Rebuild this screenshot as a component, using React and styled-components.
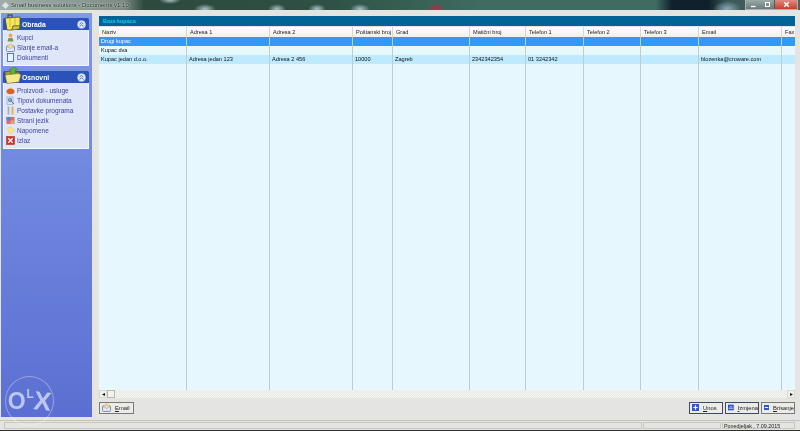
import React from 'react'
import styled, { createGlobalStyle } from 'styled-components'

const GlobalStyle = createGlobalStyle`
    html, body {
        margin: 0;
        padding: 0;
        background: #e4e4e2;
    }
    body {
        font-family: "Liberation Sans", Arial, sans-serif;
        font-size: 5.6px;
        overflow: hidden;
    }
`

const columns = [
    { title: 'Naziv', width: 88 },
    { title: 'Adresa 1', width: 83 },
    { title: 'Adresa 2', width: 83 },
    { title: 'Poštanski broj', width: 40 },
    { title: 'Grad', width: 77 },
    { title: 'Matični broj', width: 56 },
    { title: 'Telefon 1', width: 58 },
    { title: 'Telefon 2', width: 57 },
    { title: 'Telefon 3', width: 58 },
    { title: 'Email', width: 83 },
    { title: 'Fax', width: 14 },
]

const rows = [
    { cells: ['Drugi kupac'], kind: 'selected' },
    { cells: ['Kupac dva'], kind: 'plain' },
    {
        cells: ['Kupac jedan d.o.o.', 'Adresa jedan 123', 'Adresa 2 456', '10000', 'Zagreb', '2342342354', '01 3242342', '', '', 'blozenka@croware.com', ''],
        kind: 'alt',
    },
]

const gridColumns = columns.map((c) => c.width + 'px').join(' ')

const FolderIcon = ({ arrow }) => (
    <svg width="18" height="17" viewBox="0 0 18 17">
        {arrow
            ? <>
                <path d="M1 5 L7 4 L8 6 L15 5 L15 14 L3 16 Z" fill="#b79a3a" stroke="#5d5a20" strokeWidth="0.6" />
                <path d="M6 7 L7 3 L5 3 L10 0 L14 2.5 L11.5 3 L11 8 Z" fill="#5fb52c" stroke="#2f7a16" strokeWidth="0.5" />
                <path d="M1 8 L14 6.5 L17 7.5 L15 15 L3 16.5 Z" fill="#f5ea8a" stroke="#6f6a24" strokeWidth="0.6" />
            </>
            : <>
                <path d="M4 0.5 L4 12 M8 0.5 L8 10 M4 1 L8 1" fill="none" stroke="#3f3c18" strokeWidth="1" />
                <path d="M1 4 L16 3 L16 12 L9 12 L8 16 L3 16 Z" fill="#f4e75c" stroke="#4e4a18" strokeWidth="0.8" />
                <path d="M9 12 L16 12 L15 15 L8 16 Z" fill="#d6c440" stroke="#4e4a18" strokeWidth="0.5" />
                <path d="M6 4 L6 13 M11 4 L11 11" fill="none" stroke="#a89a30" strokeWidth="0.6" />
            </>}
    </svg>
)

const CollapseIcon = () => (
    <svg width="9" height="9" viewBox="0 0 9 9">
        <circle cx="4.5" cy="4.5" r="4" fill="#e8edfb" stroke="#9fb2e8" strokeWidth="0.6" />
        <path d="M2.5 4.2 L4.5 2.4 L6.5 4.2 M2.5 6.6 L4.5 4.8 L6.5 6.6" fill="none" stroke="#2d4fb0" strokeWidth="0.8" />
    </svg>
)

const MenuIcon = ({ name }) => {
    const art = {
        person: <><circle cx="4.5" cy="2.5" r="2" fill="#e8a85a" /><path d="M1.5 8.5 L2.5 5 L6.5 5 L7.5 8.5 Z" fill="#7f9a3a" /></>,
        mail: <><rect x="0.5" y="3" width="8" height="5.5" rx="1" fill="#dfe6f5" stroke="#5a6a9a" strokeWidth="0.7" /><path d="M1 3.5 L4.5 1 L8 3.5 L4.5 5.5 Z" fill="#f2dd8c" stroke="#8b8a60" strokeWidth="0.4" /></>,
        doc: <><rect x="1.5" y="0.5" width="6" height="8" fill="#eaf2fb" stroke="#35609f" strokeWidth="0.8" /></>,
        box: <><ellipse cx="4.5" cy="5.5" rx="4" ry="2.8" fill="#d9622b" /><path d="M2 3 Q4.5 0 7 3 Z" fill="#f3b25a" /></>,
        search: <><rect x="1" y="1" width="6" height="7.5" fill="#d8e4ee" stroke="#7a8fa0" strokeWidth="0.5" /><circle cx="4" cy="4" r="1.7" fill="#7fb2d8" stroke="#35609f" strokeWidth="0.6" /><path d="M5.2 5.2 L8 8" stroke="#35609f" strokeWidth="0.9" /></>,
        tools: <><path d="M2.5 0.5 L2.5 8.5" stroke="#a8aeb6" strokeWidth="1.8" /><path d="M6.5 0.5 L6.5 8.5" stroke="#e0ad4c" strokeWidth="1.8" /></>,
        flag: <><rect x="0.5" y="1" width="8" height="7" fill="#d8705e" /><rect x="0.5" y="1" width="4" height="3.5" fill="#5a80d0" /><rect x="4.5" y="4.5" width="4" height="3.5" fill="#e89a88" /></>,
        note: <><path d="M1 2 L6 0.8 L8.5 5 L4 8.5 Z" fill="#f6e58c" stroke="#e0cc70" strokeWidth="0.4" /></>,
        exit: <><rect x="0.5" y="0.5" width="8" height="8" fill="#e02a20" stroke="#a51a14" strokeWidth="0.5" /><path d="M2.3 2.3 L6.7 6.7 M6.7 2.3 L2.3 6.7" stroke="#fff" strokeWidth="1.3" /></>,
    }
    return <svg width="9" height="9" viewBox="0 0 9 9">{art[name]}</svg>
}

const ActionIcon = ({ kind }) => (
    <svg width="7" height="7" viewBox="0 0 8 8">
        <rect width="8" height="8" fill="#2f55c8" />
        {kind === 'plus' && <path d="M4 1.5 L4 6.5 M1.5 4 L6.5 4" stroke="#fff" strokeWidth="1.4" />}
        {kind === 'edit' && <path d="M1.5 5.5 L4 2 L6.5 5.5 Z" fill="none" stroke="#dfe8ff" strokeWidth="0.9" />}
        {kind === 'minus' && <path d="M1.2 4 L6.8 4" stroke="#fff" strokeWidth="1.5" />}
    </svg>
)

const WindowGlyph = ({ kind }) => (
    <svg width="7" height="7" viewBox="0 0 7 7">
        {kind === 'min' && <path d="M1 5.5 L5.5 5.5" stroke="#fff" strokeWidth="1.4" />}
        {kind === 'max' && <rect x="1.5" y="1.5" width="4" height="4" fill="none" stroke="#fff" strokeWidth="1" />}
        {kind === 'close' && <path d="M1.2 1.2 L5.8 5.8 M5.8 1.2 L1.2 5.8" stroke="#fff" strokeWidth="1.4" />}
    </svg>
)

const App = () => {
    return (
        <Window>
            <GlobalStyle />
            <TitleBar>
                <TitleIcon />
                <TitleText>Small business solutions - Documents v1.10</TitleText>
                <TitleControls>
                    <TitleButton><WindowGlyph kind="min" /></TitleButton>
                    <TitleButton><WindowGlyph kind="max" /></TitleButton>
                    <CloseButton><WindowGlyph kind="close" /></CloseButton>
                </TitleControls>
            </TitleBar>

            <Body>
                <Sidebar>
                    <Panel>
                        <PanelHeader>
                            <PanelIcon><FolderIcon /></PanelIcon>
                            <PanelTitle>Obrada</PanelTitle>
                            <CollapseIcon />
                        </PanelHeader>
                        <PanelBody>
                            <MenuItem><MenuIcon name="person" />Kupci</MenuItem>
                            <MenuItem><MenuIcon name="mail" />Slanje email-a</MenuItem>
                            <MenuItem><MenuIcon name="doc" />Dokumenti</MenuItem>
                        </PanelBody>
                    </Panel>
                    <Panel>
                        <PanelHeader>
                            <PanelIcon><FolderIcon arrow /></PanelIcon>
                            <PanelTitle>Osnovni</PanelTitle>
                            <CollapseIcon />
                        </PanelHeader>
                        <PanelBody>
                            <MenuItem><MenuIcon name="box" />Proizvodi - usluge</MenuItem>
                            <MenuItem><MenuIcon name="search" />Tipovi dokumenata</MenuItem>
                            <MenuItem><MenuIcon name="tools" />Postavke programa</MenuItem>
                            <MenuItem><MenuIcon name="flag" />Strani jezik</MenuItem>
                            <MenuItem><MenuIcon name="note" />Napomene</MenuItem>
                            <MenuItem><MenuIcon name="exit" />Izlaz</MenuItem>
                        </PanelBody>
                    </Panel>
                </Sidebar>

                <Main>
                    <SectionBar>Baza kupaca</SectionBar>
                    <Table>
                        <HeaderRow>
                            {columns.map((c) => <HeaderCell key={c.title}>{c.title}</HeaderCell>)}
                        </HeaderRow>
                        {rows.map((row) => (
                            <Row key={row.cells[0]} $kind={row.kind}>
                                {columns.map((c, i) => <Cell key={c.title}>{row.cells[i]}</Cell>)}
                            </Row>
                        ))}
                        <FillRow>
                            {columns.map((c) => <FillCell key={c.title} />)}
                        </FillRow>
                    </Table>
                    <ScrollBar>
                        <ScrollButton>◂</ScrollButton>
                        <ScrollThumb />
                        <ScrollTrack />
                        <ScrollButton>▸</ScrollButton>
                    </ScrollBar>
                    <Footer>
                        <FooterButton $width={35}><MenuIcon name="mail" /><span><u>E</u>mail</span></FooterButton>
                        <FooterActions>
                            <FooterButton $width={34} $focused><ActionIcon kind="plus" /><span><u>U</u>nos</span></FooterButton>
                            <FooterButton $width={34} $focused><ActionIcon kind="edit" /><span><u>I</u>zmjena</span></FooterButton>
                            <FooterButton $width={34}><ActionIcon kind="minus" /><span><u>B</u>risanje</span></FooterButton>
                        </FooterActions>
                    </Footer>
                </Main>
            </Body>

            <StatusBar>
                <StatusCell $grow />
                <StatusCell $width={78} />
                <StatusCell $width={73}>Ponedjeljak , 7.09.2015</StatusCell>
            </StatusBar>

            <Watermark>
                <WatermarkO>O</WatermarkO>
                <WatermarkL>L</WatermarkL>
                <WatermarkX>X</WatermarkX>
            </Watermark>
        </Window>
    )
}

const Window = styled.div`
    position: relative;
    width: 800px;
    height: 431px;
    display: flex;
    flex-direction: column;
    overflow: hidden;
    background: #e4e4e2;
    filter: blur(0.3px);
`

const TitleBar = styled.div`
    height: 10px;
    margin-bottom: 1px;
    flex: none;
    display: flex;
    align-items: center;
    padding-left: 3px;
    gap: 3px;
    color: #0c1a16;
    font-size: 6px;
    text-shadow: 0 0 2px #e8eeec, 0 0 1px #e8eeec;
    background:
        radial-gradient(ellipse 11px 4px at 170px 0px, #aebfc0, transparent),
        radial-gradient(ellipse 11px 5px at 205px 9px, #a9c2c8, transparent),
        radial-gradient(ellipse 9px 5px at 277px 9px, #a9c2c8, transparent),
        radial-gradient(ellipse 9px 5px at 317px 9px, #a9c2c8, transparent),
        radial-gradient(ellipse 10px 5px at 360px 9px, #a9c2c8, transparent),
        radial-gradient(ellipse 9px 6px at 436px 9px, #a83048, transparent),
        radial-gradient(ellipse 14px 8px at 727px 9px, #8aa8bc, transparent),
        linear-gradient(90deg, #a0aca8 0%, #8c9a94 10%, #7c8a82 15.5%, #2d4a3e 18%, #2f5044 40%, #3f6b60 60%, #3f6b60 82%, #10202c 84%, #10202c 88.5%, #3c5a58 91%, #4a6260 100%);
`

const TitleIcon = styled.div`
    width: 5px;
    height: 5px;
    background: #d8e4ec;
    transform: rotate(45deg);
`

const TitleText = styled.div`
    flex: 1;
`

const TitleControls = styled.div`
    display: flex;
    align-self: flex-start;
    height: 10px;
    margin-right: 2px;
    box-sizing: border-box;
    border: 1px solid #a8b2b2;
    border-top: 0;
`

const TitleButton = styled.div`
    width: 14px;
    display: flex;
    align-items: center;
    justify-content: center;
    background: linear-gradient(#9aa8a8, #6a7c7c);
`

const CloseButton = styled(TitleButton)`
    width: 22px;
    margin-left: 1px;
    background: linear-gradient(#e08a80, #c8402f);
`

const Body = styled.div`
    flex: 1;
    min-height: 0;
    display: flex;
    padding: 2px 0 3px 1px;
    gap: 5px;
`

const Sidebar = styled.div`
    width: 91px;
    flex: none;
    box-sizing: border-box;
    padding: 5px 3px 0 2px;
    display: flex;
    flex-direction: column;
    gap: 5px;
    background: linear-gradient(#7f98e8, #5b6fd2);
`

const Panel = styled.div`
    display: flex;
    flex-direction: column;
`

const PanelHeader = styled.div`
    position: relative;
    height: 12px;
    display: flex;
    align-items: center;
    padding: 0 3px 0 19px;
    background: #2a52b8;
    color: #fff;
    border-radius: 2px 2px 0 0;
`

const PanelIcon = styled.div`
    position: absolute;
    left: 1px;
    top: -4px;
    line-height: 0;
`

const PanelTitle = styled.div`
    flex: 1;
    font-weight: bold;
    font-size: 6.8px;
`

const PanelBody = styled.div`
    padding: 2px 0 3px 2px;
    background: #dfe6f8;
    border: 1px solid #f4f7fe;
    border-top: 0;
    display: flex;
    flex-direction: column;
`

const MenuItem = styled.div`
    height: 10px;
    display: flex;
    align-items: center;
    gap: 2px;
    color: #3d3f9c;
    font-size: 6.5px;
    white-space: nowrap;
`

const Watermark = styled.div`
    position: absolute;
    left: 5px;
    top: 376px;
    width: 49px;
    height: 50px;
    box-sizing: border-box;
    border: 1px solid rgba(255, 255, 255, 0.35);
    border-radius: 50%;
    display: flex;
    align-items: center;
    justify-content: center;
    color: #bcc7f0;
    font-weight: bold;
    line-height: 1;
`

const WatermarkO = styled.span`
    font-size: 23px;
`

const WatermarkL = styled.span`
    font-size: 12px;
    align-self: flex-start;
    margin: 11px 0 0 1px;
`

const WatermarkX = styled.span`
    font-size: 26px;
    transform: rotate(6deg);
`

const Main = styled.div`
    flex: 1;
    min-width: 0;
    display: flex;
    flex-direction: column;
    padding: 3px 5px 0 2px;
    background: #e4e4e2;
`

const SectionBar = styled.div`
    height: 10px;
    flex: none;
    padding-left: 4px;
    line-height: 10px;
    font-weight: bold;
    font-size: 5.4px;
    color: #19c8f0;
    background: #026496;
`

const Table = styled.div`
    flex: 1;
    min-height: 0;
    display: flex;
    flex-direction: column;
    margin-top: 1px;
    overflow: hidden;
    background: #e6f8fe;
`

const HeaderRow = styled.div`
    height: 10px;
    flex: none;
    display: grid;
    grid-template-columns: ${gridColumns};
    background: linear-gradient(#ffffff, #f0efe8);
`

const HeaderCell = styled.div`
    padding-left: 3px;
    line-height: 10px;
    color: #222;
    white-space: nowrap;
    overflow: hidden;
    border-right: 1px solid #d8d8d0;
    box-sizing: border-box;
`

const rowColors = {
    selected: { bg: '#3497fb', fg: '#ffffff' },
    plain: { bg: '#e6f8fe', fg: '#111111' },
    alt: { bg: '#bfe9fd', fg: '#111111' },
}

const Row = styled.div`
    height: 9px;
    flex: none;
    display: grid;
    grid-template-columns: ${gridColumns};
    background: ${(p) => rowColors[p.$kind].bg};
    color: ${(p) => rowColors[p.$kind].fg};
`

const Cell = styled.div`
    padding-left: 2px;
    line-height: 9px;
    white-space: nowrap;
    overflow: hidden;
    border-right: 1px solid #b9cdd2;
    box-sizing: border-box;
`

const FillRow = styled.div`
    flex: 1;
    display: grid;
    grid-template-columns: ${gridColumns};
`

const FillCell = styled.div`
    border-right: 1px solid #b9cdd2;
`

const ScrollBar = styled.div`
    height: 8px;
    flex: none;
    display: flex;
    background: repeating-conic-gradient(#f4f4f0 0 25%, #e8e8e4 0 50%) 0 0 / 2px 2px;
`

const ScrollButton = styled.div`
    width: 8px;
    box-sizing: border-box;
    border: 1px solid #d8d8d0;
    background: #f0f0ec;
    color: #111;
    font-size: 6px;
    line-height: 6px;
    text-align: center;
`

const ScrollThumb = styled.div`
    width: 8px;
    box-sizing: border-box;
    border: 1px solid #b8b8b0;
    background: #f2f2ee;
`

const ScrollTrack = styled.div`
    flex: 1;
`

const Footer = styled.div`
    height: 19px;
    flex: none;
    display: flex;
    align-items: center;
    justify-content: space-between;
`

const FooterActions = styled.div`
    display: flex;
    gap: 2px;
`

const FooterButton = styled.div`
    width: ${(p) => p.$width}px;
    height: 12px;
    box-sizing: border-box;
    display: flex;
    align-items: center;
    gap: 4px;
    padding-left: 2px;
    color: #222;
    font-size: 5.8px;
    border: 1px solid ${(p) => (p.$focused ? '#3d4a60' : '#7a7a72')};
    background: #ebebe7;
    white-space: nowrap;
`

const StatusBar = styled.div`
    height: 11px;
    flex: none;
    box-sizing: border-box;
    display: flex;
    gap: 1px;
    padding: 1px 5px 1px 4px;
    border-top: 1px solid #c4c4bc;
    border-bottom: 1px solid #30302c;
`

const StatusCell = styled.div`
    ${(p) => (p.$grow ? 'flex: 1;' : `width: ${p.$width}px;`)}
    box-sizing: border-box;
    border: 1px solid #c8c8c0;
    padding-left: 1px;
    line-height: 7px;
    font-size: 5.4px;
    color: #222;
    white-space: nowrap;
`

export default App
